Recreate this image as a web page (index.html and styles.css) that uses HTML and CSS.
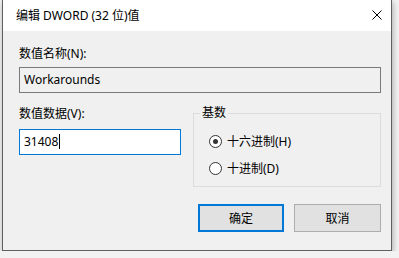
FILE: index.html
```html
<!DOCTYPE html>
<html lang="zh-CN">
<head>
    <meta charset="UTF-8">
    <meta name="viewport" content="width=device-width, initial-scale=1.0">
    <title>编辑 DWORD (32 位)值</title>
    <link rel="stylesheet" href="styles.css">
</head>
<body>
    <div class="window">
        <div class="titlebar">
            <span class="title">编辑 DWORD (32 位)值</span>
            <svg class="close" width="10" height="10" viewBox="0 0 10 10">
                <path d="M0.5 0.5 L9.5 9.5 M9.5 0.5 L0.5 9.5" stroke="#000" stroke-width="1" fill="none"/>
            </svg>
        </div>
        <div class="content">
            <label class="label">数值名称(N):</label>
            <div class="field readonly">Workarounds</div>

            <div class="lower">
                <div class="data-col">
                    <label class="label">数值数据(V):</label>
                    <div class="field active">31408<span class="caret"></span></div>
                </div>
                <fieldset class="radix">
                    <legend>基数</legend>
                    <div class="radio-row">
                        <span class="radio checked"></span>
                        <span>十六进制(H)</span>
                    </div>
                    <div class="radio-row">
                        <span class="radio"></span>
                        <span>十进制(D)</span>
                    </div>
                </fieldset>
            </div>

            <div class="buttons">
                <button class="btn default">确定</button>
                <button class="btn">取消</button>
            </div>
        </div>
    </div>
</body>
</html>
```

FILE: styles.css
```css
body, html {
    margin: 0;
    padding: 0;
    background-color: #f2f2f2;
    font-family: "Noto Sans", "Noto Sans CJK SC", sans-serif;
    font-size: 12px;
    color: #000;
}
.window {
    width: 388px;
    margin-left: 2px;
    border: 1px solid #5f5f5f;
    border-top: none;
    box-shadow: 1px 2px 6px rgba(0, 0, 0, 0.3);
    background: #f0f0f0;
}
.titlebar {
    height: 31px;
    background: #fff;
    display: flex;
    align-items: center;
    justify-content: space-between;
    padding: 0 9px 0 13px;
}
.title {
    line-height: 31px;
}
.close {
    display: block;
    margin-bottom: 2px;
}
.content {
    padding: 15px 10px 18px 16px;
}
.label {
    display: block;
    line-height: 16px;
    height: 16px;
}
.field {
    box-sizing: border-box;
    height: 26px;
    margin-top: 5px;
    padding: 0 4px;
    line-height: 24px;
    border: 1px solid #7a7a7a;
    background: #f0f0f0;
    white-space: nowrap;
}
.field.active {
    margin-top: 7px;
    border-color: #0078d7;
    background: #fff;
}
.caret {
    display: inline-block;
    width: 1px;
    height: 15px;
    background: #000;
    vertical-align: -3px;
    margin-left: 1px;
}
.lower {
    display: flex;
    align-items: flex-start;
    gap: 12px;
    margin-top: 13px;
}
.data-col {
    width: 162px;
}
.radix {
    box-sizing: border-box;
    width: 188px;
    margin: -1px 0 0 0;
    padding: 12px 6px 10px 6px;
    border: 1px solid #dcdcdc;
    min-width: 0;
}
.radix legend {
    padding: 0 2px;
    line-height: 16px;
}
.radio-row {
    display: flex;
    align-items: center;
    height: 16px;
    margin-left: 9px;
}
.radio-row + .radio-row {
    margin-top: 11px;
}
.radio {
    box-sizing: border-box;
    width: 13px;
    height: 13px;
    border: 1px solid #333;
    border-radius: 50%;
    background: #fff;
    margin-right: 5px;
    position: relative;
}
.radio.checked::after {
    content: "";
    position: absolute;
    left: 3px;
    top: 3px;
    width: 5px;
    height: 5px;
    border-radius: 50%;
    background: #333;
}
.buttons {
    display: flex;
    justify-content: flex-end;
    gap: 10px;
    margin-top: 17px;
}
.btn {
    box-sizing: border-box;
    width: 87px;
    height: 28px;
    font-family: inherit;
    font-size: 12px;
    color: #000;
    background: #e1e1e1;
    border: 1px solid #adadad;
    padding: 0;
}
.btn.default {
    width: 86px;
    border: 2px solid #0078d7;
}
```
